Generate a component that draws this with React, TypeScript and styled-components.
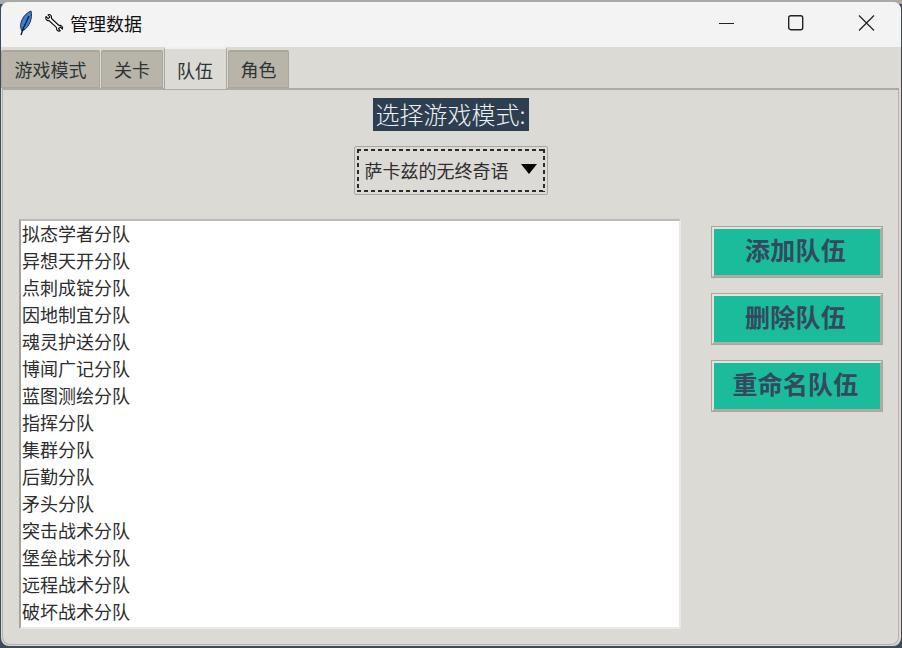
import React from "react";
import styled, { createGlobalStyle } from "styled-components";

const Global = createGlobalStyle`
  html, body { margin: 0; padding: 0; background: #3c4c5c; }
  * { box-sizing: border-box; }
`;

const CJK = `"Noto Sans CJK SC", "Noto Sans", sans-serif`;

const Desktop = styled.div`
  width: 902px;
  height: 648px;
  background: linear-gradient(#a9a9a5 0, #a9a9a5 4px, #3c4c5c 4px);
  overflow: hidden;
  padding: 2px 0 2px 1px;
`;

const Win = styled.div`
  width: 900px;
  height: 644px;
  border-radius: 8px;
  overflow: hidden;
  background: #dcdad5;
  display: flex;
  flex-direction: column;
  font-family: ${CJK};
  color: #2f2f2f;
`;

const TitleBar = styled.div`
  height: 45px;
  flex: none;
  background: #f3f3f3;
  display: flex;
  align-items: center;
  padding-bottom: 3px;
  color: #111;
`;

const Feather = styled.svg`
  width: 20px;
  height: 26px;
  margin-left: 15px;
`;

const Wrench = styled.svg`
  width: 20px;
  height: 20px;
  margin-left: 8px;
`;

const Title = styled.div`
  font-size: 18px;
  line-height: 24px;
  margin-left: 6px;
  flex: 1;
`;

const Caption = styled.div`
  width: 70px;
  height: 42px;
  display: flex;
  align-items: center;
  justify-content: center;
`;

const TabBar = styled.div`
  height: 41px;
  flex: none;
  display: flex;
  align-items: flex-end;
  gap: 1px;
`;

const Tab = styled.div<{ $active?: boolean; $w: number }>`
  width: ${(p) => p.$w}px;
  height: ${(p) => (p.$active ? 42 : 38)}px;
  margin-bottom: ${(p) => (p.$active ? -1 : 0)}px;
  padding-right: ${(p) => (p.$active ? 1 : 0)}px;
  position: relative;
  z-index: ${(p) => (p.$active ? 2 : 0)};
  background: ${(p) => (p.$active ? "#dcdad5" : "#b8b4a9")};
  border: 1px solid #a9a69c;
  border-bottom: ${(p) => (p.$active ? "none" : "1px solid #a9a69c")};
  border-top: 2px solid ${(p) => (p.$active ? "#f0efec" : "#a9a69c")};
  border-radius: 2px 2px 0 0;
  font-size: 18px;
  line-height: ${(p) => (p.$active ? 43 : 35)}px;
  text-align: center;
  color: #2e3436;
`;

const Panel = styled.div`
  flex: 1;
  margin: 0 2px 1px 1px;
  border: 1px solid #b4b1a8;
  border-top: 2px solid #aeaba2;
  border-radius: 0 0 8px 8px;
  display: flex;
  flex-direction: column;
  align-items: center;
  padding-top: 8px;
`;

const Heading = styled.div`
  width: 156px;
  height: 33px;
  background: #2c3e50;
  color: #ecf0f1;
  font-size: 24px;
  font-weight: 300;
  line-height: 31px;
  text-align: center;
  white-space: nowrap;
`;

const Dropdown = styled.div`
  width: 194px;
  height: 49px;
  margin-top: 15px;
  border: 1px solid #aaa79d;
  border-radius: 2px;
  background: #dcdad5;
  padding: 2px;
  display: flex;
`;

const DropdownInner = styled.div`
  flex: 1;
  display: flex;
  align-items: center;
  padding: 0 0 2px 8px;
  font-size: 18px;
  color: #2e2e2e;
  white-space: nowrap;
  gap: 12px;
  background-image:
    repeating-linear-gradient(90deg, #2a2a2a 0 4px, transparent 4px 7px),
    repeating-linear-gradient(90deg, #2a2a2a 0 4px, transparent 4px 7px),
    repeating-linear-gradient(180deg, #2a2a2a 0 4px, transparent 4px 7px),
    repeating-linear-gradient(180deg, #2a2a2a 0 4px, transparent 4px 7px);
  background-size: 100% 2px, 100% 2px, 2px 100%, 2px 100%;
  background-position: 0 0, 0 100%, 0 0, 100% 0;
  background-repeat: no-repeat;
`;

const Arrow = styled.span`
  width: 0;
  height: 0;
  margin-top: -2px;
  border-left: 8.5px solid transparent;
  border-right: 8.5px solid transparent;
  border-top: 10px solid #000;
`;

const Body = styled.div`
  align-self: stretch;
  display: flex;
  margin-top: 24px;
  padding-left: 16px;
  align-items: flex-start;
`;

const List = styled.div`
  width: 662px;
  height: 410px;
  background: #fff;
  border: 2px solid #ebe9e5;
  border-left-color: #a5a39e;
  border-top-color: #bdbbb5;
  padding-left: 1px;
  overflow: hidden;
`;

const Row = styled.div`
  height: 27px;
  font-size: 18px;
  line-height: 25px;
  color: #2d2d2d;
  white-space: nowrap;
`;

const Buttons = styled.div`
  margin-left: 30px;
  margin-top: 7px;
  display: flex;
  flex-direction: column;
  gap: 15px;
`;

const ActionButton = styled.div`
  width: 172px;
  height: 52px;
  background: #1abc9c;
  border: 3px solid #b0aca2;
  border-top-color: #e4e2dd;
  border-left-color: #e4e2dd;
  outline: 1px solid #a9a69c;
  outline-offset: -1px;
  color: #34495e;
  font-size: 25px;
  font-weight: 600;
  line-height: 40px;
  letter-spacing: 0.2px;
  padding-right: 3px;
  text-align: center;
`;

const tabs: [string, number, boolean?][] = [
  ["游戏模式", 99],
  ["关卡", 62],
  ["队伍", 63, true],
  ["角色", 61],
];

const items = [
  "拟态学者分队", "异想天开分队", "点刺成锭分队", "因地制宜分队", "魂灵护送分队",
  "博闻广记分队", "蓝图测绘分队", "指挥分队", "集群分队", "后勤分队", "矛头分队",
  "突击战术分队", "堡垒战术分队", "远程战术分队", "破坏战术分队",
];

export default function App() {
  return (
    <Desktop>
      <Global />
      <Win>
        <TitleBar>
          <Feather viewBox="0 0 20 26">
            <path d="M6 21 C2 15 7 4 15 1 C17 8 13 17 8 20 Z" fill="#3d7fd0" stroke="#1d2f4f" strokeWidth="1" />
            <path d="M5 25 L7 19 L13 6" stroke="#0d1b33" strokeWidth="1.4" fill="none" />
          </Feather>
          <Wrench viewBox="0 0 20 20">
            <path d="M2 3.5 L4.2 5.6 L6 4 L4 1.8 C6.5 0.8 8 3 7.5 5.5 L15 12.5 C17 12 19.2 13.5 18.5 16 L16.2 14 L14.4 15.6 L16.4 17.8 C14 18.8 12 17 12.6 14.6 L5 7.5 C2.8 8 1 6 2 3.5 Z" fill="#fff" stroke="#111" strokeWidth="1.1" strokeLinejoin="round" />
          </Wrench>
          <Title>管理数据</Title>
          <Caption>
            <svg width="18" height="18" viewBox="0 0 18 18"><path d="M2 9.5H17" stroke="#222" strokeWidth="1" /></svg>
          </Caption>
          <Caption>
            <svg width="18" height="18" viewBox="0 0 18 18"><rect x="1.7" y="1.7" width="14" height="14" rx="2" fill="none" stroke="#222" strokeWidth="1.4" /></svg>
          </Caption>
          <Caption>
            <svg width="18" height="18" viewBox="0 0 18 18"><path d="M2 1.5L17 16.5M17 1.5L2 16.5" stroke="#222" strokeWidth="1.2" /></svg>
          </Caption>
        </TitleBar>
        <TabBar>
          {tabs.map(([t, w, a]) => (
            <Tab key={t} $w={w} $active={a}>{t}</Tab>
          ))}
        </TabBar>
        <Panel>
          <Heading>选择游戏模式:</Heading>
          <Dropdown>
            <DropdownInner>
              <span>萨卡兹的无终奇语</span>
              <Arrow />
            </DropdownInner>
          </Dropdown>
          <Body>
            <List>
              {items.map((i) => <Row key={i}>{i}</Row>)}
            </List>
            <Buttons>
              <ActionButton>添加队伍</ActionButton>
              <ActionButton>删除队伍</ActionButton>
              <ActionButton>重命名队伍</ActionButton>
            </Buttons>
          </Body>
        </Panel>
      </Win>
    </Desktop>
  );
}
